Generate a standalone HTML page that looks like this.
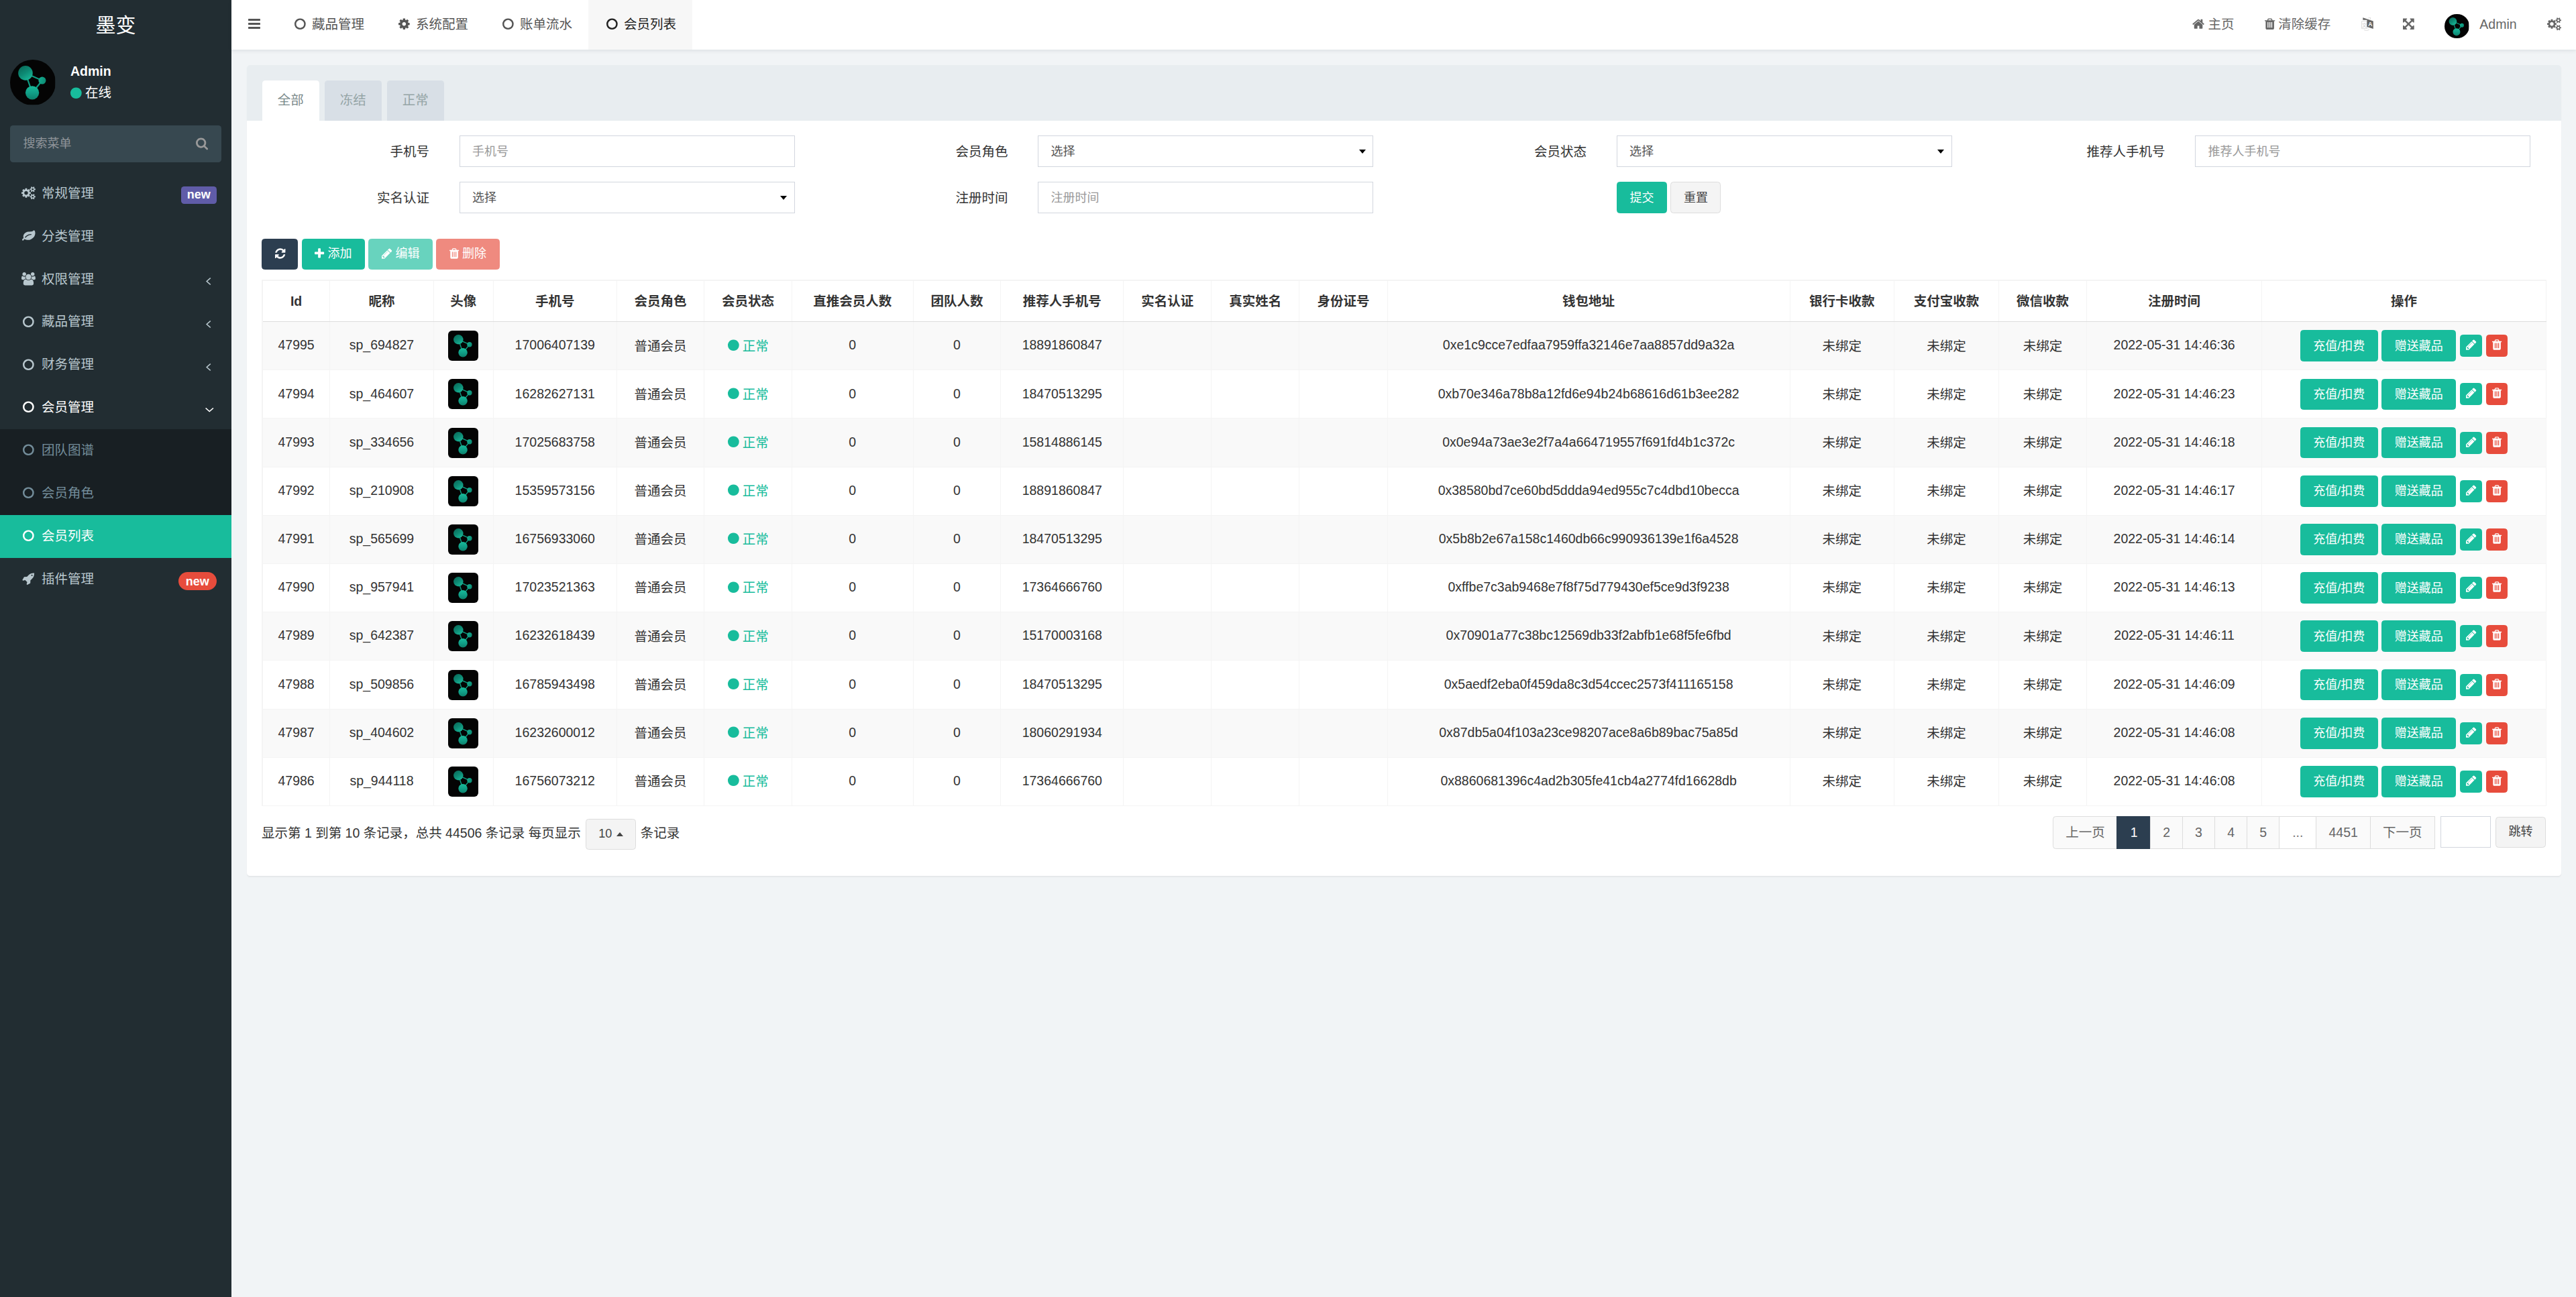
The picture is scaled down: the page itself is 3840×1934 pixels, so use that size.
<!DOCTYPE html>
<html lang="zh-CN"><head><meta charset="utf-8"><title>会员列表</title>
<style>
html,body{margin:0;padding:0;background:#f1f4f6;}
body{width:3840px;height:1934px;overflow:hidden;}
#z{zoom:1.5;position:relative;width:2560px;height:1289.34px;overflow:hidden;font-family:"Liberation Sans","Noto Sans CJK SC",sans-serif;font-size:13px;line-height:1.42857;color:#333;}
#z *{box-sizing:border-box;}
ul{list-style:none;margin:0;padding:0;}
a{text-decoration:none;color:inherit;}
.fa{display:inline-block;height:1em;fill:currentColor;vertical-align:-0.1429em;overflow:visible;}
/* sidebar */
.sidebar{position:absolute;left:0;top:0;width:230px;height:100%;background:#222d32;color:#b8c7ce;}
.logo{height:49.6px;line-height:50px;text-align:center;font-size:20px;color:#fff;background:#222d32;}
.uavatar{position:absolute;left:10px;top:59.5px;width:45px;height:45px;border-radius:50%;}
.uname{position:absolute;left:70px;top:64.6px;line-height:13px;font-weight:bold;color:#fff;}
.ustat{position:absolute;left:70px;top:85.6px;line-height:13px;color:#fff;white-space:pre;}
.udot{color:#18bc9c;position:relative;top:.6px;}
.sform{position:absolute;left:10px;top:124.6px;width:210px;height:36.8px;background:#374850;border-radius:3px;}
.sform .ph{position:absolute;left:13px;top:0;line-height:36.8px;color:#8f9499;font-size:12px;}
.sico{position:absolute;left:184.5px;top:11.6px;color:#999;font-size:13px;}
.smenu{position:absolute;left:0;top:171.3px;width:230px;}
.smenu li a{display:block;position:relative;padding:12px 5px 12px 15px;border-left:3px solid transparent;line-height:18.57px;height:42.57px;white-space:nowrap;}
.mib{display:inline-block;width:20px;text-align:center;position:relative;left:.6px;}
.smenu li.open>a{color:#fff;}
.smenu .sub{background:#181f23;}
.smenu .sub li a{color:#738d9a;}
.smenu .sub li.active a{background:#18bc9c;color:#fff;}
.prc{position:absolute;right:10px;top:50%;margin-top:-7px;line-height:13px;}
.chev{margin-right:10.4px;position:relative;top:2px;transform:scaleX(1.12);}
.chev.dn{margin-right:7.9px;}
.label{display:inline-block;font-size:12px;font-weight:bold;color:#fff;line-height:1;text-align:center;border-radius:3px;vertical-align:baseline;}
.bg-purple{background:#605ca8;width:35.3px;height:17.4px;padding-top:2.2px;margin-top:-0.15px;margin-right:4.8px;}
.bg-red{background:#e74c3c;width:38px;height:18px;border-radius:9px;padding-top:3.3px;margin-top:0.2px;margin-right:4.9px;}
/* header */
.hdr{position:absolute;left:230px;top:0;right:0;height:49.5px;background:#fff;box-shadow:0 1px 3.5px rgba(0,21,41,.085);color:#555;}
.toggle{position:absolute;left:16.8px;top:0;line-height:48.5px;font-size:14px;color:#555;}
.tabs{position:absolute;left:44.67px;top:0;height:49.5px;}
.tabs li{float:left;width:103.33px;height:49.5px;}
.tabs li a{display:block;padding:0 15px;line-height:49px;white-space:nowrap;color:#555;}
.tabs li.active{background:#f7f7f7;}
.tabs li.active a{color:#222;}
.fw{display:inline-block;width:16.71px;text-align:center;}
.rnav{position:absolute;right:0;top:0;height:49.5px;display:flex;}
.rnav li a{display:block;padding:0 15px;line-height:48.6px;white-space:nowrap;color:#666;}
.havatar{width:24.4px;height:24.4px;border-radius:50%;vertical-align:middle;margin-right:10.5px;margin-top:3.4px;position:relative;top:-0.9px;}
.lang{vertical-align:-1.9px;position:relative;left:.6px;}
/* content */
.content{position:absolute;left:230px;top:49.6px;right:0;padding:15px;}
.panel{background:#fff;border-radius:3px;box-shadow:0 1px 1px rgba(0,0,0,.05);}
.phead{background:#e8edf0;height:55.4px;padding:15.4px 15px 0 15.5px;border-radius:3px 3px 0 0;}
.ntabs li{float:left;width:56.8px;margin-right:5.2px;height:40px;background:#d8dfe6;border-radius:3px 3px 0 0;color:#95a5a6;}
.ntabs li a{display:block;text-align:center;line-height:20px;padding:9.3px 0 0;}
.ntabs li.active{background:#fff;color:#7b8a8b;}
.pbody{padding:15px;}
.cs{margin:0 -15px;}
.frow{height:46px;}
.frow:after{content:"";display:block;clear:both;}
.fg{float:left;width:25%;padding:0 15px;height:31px;}
.fg label{float:left;width:33.3333%;text-align:right;padding:7px 15px 0 15px;line-height:18.57px;font-weight:normal;}
.fc{float:left;width:calc(66.6667% - 30px);margin-left:15px;height:31px;border:1px solid #d2d6de;background:#fff;padding:7px 12px 5px;font-size:12px;line-height:17.14px;color:#555;position:relative;}
.fc .ph{color:#999;}
.caret{display:inline-block;width:0;height:0;border-top:4px solid #000;border-left:3.8px solid transparent;border-right:3.8px solid transparent;}
.fc .caret{position:absolute;right:7px;top:13px;}
.caret.up{border-top:0;border-bottom:4px solid #444;vertical-align:middle;margin-left:.6px;position:relative;left:.8px;}
.fbtn{margin-left:calc(33.3333% + 15px);white-space:nowrap;}
.fbtn .btn{height:31.14px;padding-top:6.9px;margin-top:-.2px;}
.btn{display:inline-block;padding:6px 12.35px;font-size:12px;line-height:1.42857;border:1px solid transparent;border-radius:3px;text-align:center;white-space:nowrap;vertical-align:middle;}
.btn-success{background:#18bc9c;border-color:#18bc9c;color:#fff;}
.btn-primary{background:#2c3e50;border-color:#2c3e50;color:#fff;}
.btn-danger{background:#e74c3c;border-color:#e74c3c;color:#fff;}
.btn-default{background:#f4f4f4;border-color:#ddd;color:#444;}
.btn.disabled{opacity:.65;}
.btn-xs{padding:1px 5.4px;font-size:12px;line-height:18px;height:22px;border-radius:3px;}
.toolbar{margin-top:10.3px;height:30.5px;white-space:nowrap;}
.toolbar .btn{height:30.5px;padding-top:6.3px;}
/* table */
.tbl{margin-top:10.3px;width:calc(100% - .7px);table-layout:fixed;border-collapse:collapse;border:1px solid #f4f4f4;border-top:1.4px solid #f4f4f4;border-left:1.4px solid #f4f4f4;}
.tbl th,.tbl td{border:1px solid #f4f4f4;text-align:center;vertical-align:middle;padding:0;white-space:nowrap;overflow:hidden;}
.tbl th{font-weight:bold;border-bottom:1px solid #ddd;}
.thi{padding:8px;line-height:24px;height:40px;}
.tbl td{padding:7.7px 8px 8.3px;height:48.13px;}
.tbl td:last-child,.tbl td:nth-child(3){padding:8px;}
.tbl tbody tr:nth-child(odd){background:#f9f9f9;}
.timg{width:30px;height:30px;border-radius:4px;vertical-align:middle;display:inline-block;}
.ok{color:#18bc9c;}
.opb{height:31.14px;padding-top:6.9px;padding-bottom:5px;}
/* pagination */
.pgn{position:relative;height:54.3px;}
.pinfo{position:absolute;left:0;top:11.5px;line-height:31px;white-space:nowrap;}
.psz{height:31px;width:50.2px;padding:6px 0;vertical-align:middle;margin:0 1px;}
.pright{position:absolute;right:0;top:10.2px;white-space:nowrap;}
.pagination{display:inline-block;vertical-align:top;}
.pagination li{float:left;}
.pagination li a{display:block;padding:6.6px 0 0;height:32.4px;text-align:center;margin-left:-1px;line-height:18.57px;border:1px solid #ddd;background:#fafafa;color:#666;}
.pagination li:first-child a{margin-left:0;border-radius:3px 0 0 3px;}

.pagination li.active a{background:#2c3e50;border-color:#2c3e50;color:#fff;}
.pagination li.dis a{background:#fff;color:#777;}
.jump{display:inline-block;vertical-align:top;margin-left:5.8px;}
.jin{display:inline-block;width:50px;height:31px;border:1px solid #d2d6de;background:#fff;vertical-align:top;}
.jbtn{height:30.5px;width:50px;padding:6px 0;vertical-align:top;margin-left:4.5px;margin-top:.7px;}

.cj{position:relative;top:.8px;}
@supports not (zoom:1.5){#z{transform:scale(1.5);transform-origin:0 0;}}

</style></head><body>
<svg width="0" height="0" style="position:absolute"><defs>
<linearGradient id="g1" x1="0.25" y1="0.05" x2="0.85" y2="0.95"><stop offset="0" stop-color="#0a6f5d"/><stop offset="0.45" stop-color="#0d8a74"/><stop offset="1" stop-color="#19b999"/></linearGradient>
<linearGradient id="g2" x1="0.5" y1="0" x2="0.5" y2="1"><stop offset="0" stop-color="#17bb9a"/><stop offset="0.5" stop-color="#11a088"/><stop offset="1" stop-color="#0c806b"/></linearGradient>
<linearGradient id="g3" x1="0" y1="0.3" x2="1" y2="0.7"><stop offset="0" stop-color="#14ad90"/><stop offset="1" stop-color="#0d8a73"/></linearGradient>
<symbol id="mol" viewBox="0 0 100 100"><rect width="100" height="100" fill="#040404"/>
<g stroke="#0f9c82" stroke-width="3.2" fill="none"><path d="M34 29.5L71 46L49 73Z"/></g>
<circle cx="34" cy="29.5" r="16" fill="url(#g1)"/><circle cx="71" cy="46" r="8.2" fill="url(#g3)"/><circle cx="49" cy="73" r="15" fill="url(#g2)"/>
</symbol></defs></svg>
<div id="z">
<aside class="sidebar">
<div class="logo">墨变</div>
<div class="userpanel"><svg class="uavatar" style=""><use href="#mol"/></svg><div class="uname">Admin</div><div class="ustat"><svg class="fa udot" viewBox="128 0 1536 1792" style="width:0.8571em;"><path d="M1664 896q0 209-103 385.500t-279.500 279.500-385.500 103-385.500-103-279.500-279.500-103-385.500 103-385.500 279.500-279.500 385.500-103 385.500 103 279.500 279.500 103 385.500z"/></svg> 在线</div></div>
<div class="sform"><span class="ph">搜索菜单</span><svg class="fa sico" viewBox="64 0 1664 1792" style="width:0.9286em;"><path d="M1216 832q0-185-131.500-316.500t-316.500-131.500-316.500 131.500-131.500 316.500 131.500 316.500 316.500 131.500 316.500-131.500 131.500-316.500zm512 832q0 52-38 90t-90 38q-54 0-90-38l-343-342q-179 124-399 124-143 0-273.500-55.500t-225-150-150-225-55.500-273.500 55.500-273.500 150-225 225-150 273.500-55.500 273.500 55.500 225 150 150 225 55.500 273.500q0 220-124 399l343 343q37 37 37 90z"/></svg></div>
<ul class="smenu">
<li class=""><a><span class="mib"><svg class="fa mi" viewBox="0 0 1920 1792" style="width:1.0714em;"><path d="M896 896q0-106-75-181t-181-75-181 75-75 181 75 181 181 75 181-75 75-181zm768 512q0-52-38-90t-90-38-90 38-38 90q0 53 37.500 90.500t90.500 37.500 90.500-37.500 37.500-90.500zm0-1024q0-52-38-90t-90-38-90 38-38 90q0 53 37.500 90.500t90.500 37.500 90.500-37.500 37.500-90.500zm-384 421v185q0 10-7 19.500t-16 10.500l-155 24q-11 35-32 76 34 48 90 115 7 11 7 20 0 12-7 19-23 30-82.500 89.500t-78.500 59.500q-11 0-21-7l-115-90q-37 19-77 31-11 108-23 155-7 24-30 24h-186q-11 0-20-7.500t-10-17.500l-23-153q-34-10-75-31l-118 89q-7 7-20 7-11 0-21-8-144-133-144-160 0-9 7-19 10-14 41-53t47-61q-23-44-35-82l-152-24q-10-1-17-9.500t-7-19.500v-185q0-10 7-19.500t16-10.500l155-24q11-35 32-76-34-48-90-115-7-11-7-20 0-12 7-20 22-30 82-89t79-59q11 0 21 7l115 90q34-18 77-32 11-108 23-154 7-24 30-24h186q11 0 20 7.500t10 17.500l23 153q34 10 75 31l118-89q8-7 20-7 11 0 21 8 144 133 144 160 0 8-7 19-12 16-42 54t-45 60q23 48 34 82l152 23q10 2 17 10.500t7 19.500zm640 533v140q0 16-149 31-12 27-30 52 51 113 51 138 0 4-4 7-122 71-124 71-8 0-46-47t-52-68q-20 2-30 2t-30-2q-14 21-52 68t-46 47q-2 0-124-71-4-3-4-7 0-25 51-138-18-25-30-52-149-15-149-31v-140q0-16 149-31 13-29 30-52-51-113-51-138 0-4 4-7 4-2 35-20t59-34 30-16q8 0 46 46.500t52 67.500q20-2 30-2t30 2q51-71 92-112l6-2q4 0 124 70 4 3 4 7 0 25-51 138 17 23 30 52 149 15 149 31zm0-1024v140q0 16-149 31-12 27-30 52 51 113 51 138 0 4-4 7-122 71-124 71-8 0-46-47t-52-68q-20 2-30 2t-30-2q-14 21-52 68t-46 47q-2 0-124-71-4-3-4-7 0-25 51-138-18-25-30-52-149-15-149-31v-140q0-16 149-31 13-29 30-52-51-113-51-138 0-4 4-7 4-2 35-20t59-34 30-16q8 0 46 46.500t52 67.500q20-2 30-2t30 2q51-71 92-112l6-2q4 0 124 70 4 3 4 7 0 25-51 138 17 23 30 52 149 15 149 31z"/></svg></span> <span>常规管理</span><span class="prc"><small class="label bg-purple">new</small></span></a></li>
<li class=""><a><span class="mib"><svg class="fa mi" viewBox="0 0 1792 1792" style="width:1.0000em;"><path d="M1280 704q0-26-19-45t-45-19q-172 0-318 49.500t-259.500 134-235.500 219.500q-19 21-19 45 0 26 19 45t45 19q24 0 45-19 27-24 74-71t67-66q137-124 268.500-176t313.500-52q26 0 45-19t19-45zm512-198q0 95-20 193-46 224-184.500 383t-357.500 268q-214 108-438 108-148 0-286-47-15-5-88-42t-96-37q-16 0-39.500 32t-45 70-52.500 70-60 32q-43 0-63.500-17.500t-45.500-59.500q-2-4-6-11t-5.500-10-3-9.500-1.500-13.500q0-35 31-73.500t68-65.500 68-56 31-48q0-4-14-38t-16-44q-9-51-9-104 0-115 43.500-220t119-184.500 170.500-139 204-95.500q55-18 145-25.500t179.500-9 178.500-6 163.500-24 113.500-56.500l29.500-29.500 29.500-28 27-20 36.500-16 43.500-4.500q39 0 70.500 46t47.500 112 24 124 8 96z"/></svg></span> <span>分类管理</span></a></li>
<li class=""><a><span class="mib"><svg class="fa mi" viewBox="0 0 1920 1792" style="width:1.0714em;"><path d="M593 896q-162 5-265 128h-134q-82 0-138-40.500t-56-118.500q0-353 124-353 6 0 43.500 21t97.500 42.500 119 21.500q67 0 133-23-5 37-5 66 0 139 81 256zm1071 637q0 120-73 189.500t-194 69.500h-874q-121 0-194-69.500t-73-189.500q0-53 3.500-103.500t14-109 26.500-108.500 43-97.500 62-81 85.500-53.500 111.500-20q10 0 43 21.500t73 48 107 48 135 21.500 135-21.500 107-48 73-48 43-21.500q61 0 111.500 20t85.500 53.500 62 81 43 97.500 26.500 108.500 14 109 3.500 103.500zm-1024-1277q0 106-75 181t-181 75-181-75-75-181 75-181 181-75 181 75 75 181zm704 384q0 159-112.500 271.500t-271.500 112.500-271.500-112.500-112.500-271.500 112.500-271.500 271.500-112.500 271.500 112.500 112.500 271.500zm576 225q0 78-56 118.500t-138 40.500h-134q-103-123-265-128 81-117 81-256 0-29-5-66 66 23 133 23 59 0 119-21.500t97.500-42.500 43.500-21q124 0 124 353zm-128-609q0 106-75 181t-181 75-181-75-75-181 75-181 181-75 181 75 75 181z"/></svg></span> <span>权限管理</span><span class="prc"><svg class="fa chev" viewBox="576 0 640 1792" style="width:0.3571em;"><path d="M1203 544q0 13-10 23l-393 393 393 393q10 10 10 23t-10 23l-50 50q-10 10-23 10t-23-10l-466-466q-10-10-10-23t10-23l466-466q10-10 23-10t23 10l50 50q10 10 10 23z"/></svg></span></a></li>
<li class=""><a><span class="mib"><svg class="fa mi" viewBox="128 0 1536 1792" style="width:0.8571em;"><path d="M896 352q-148 0-273 73t-198 198-73 273 73 273 198 198 273 73 273-73 198-198 73-273-73-273-198-198-273-73zm768 544q0 209-103 385.500t-279.500 279.500-385.500 103-385.500-103-279.500-279.500-103-385.500 103-385.500 279.500-279.500 385.500-103 385.500 103 279.500 279.500 103 385.500z"/></svg></span> <span>藏品管理</span><span class="prc"><svg class="fa chev" viewBox="576 0 640 1792" style="width:0.3571em;"><path d="M1203 544q0 13-10 23l-393 393 393 393q10 10 10 23t-10 23l-50 50q-10 10-23 10t-23-10l-466-466q-10-10-10-23t10-23l466-466q10-10 23-10t23 10l50 50q10 10 10 23z"/></svg></span></a></li>
<li class=""><a><span class="mib"><svg class="fa mi" viewBox="128 0 1536 1792" style="width:0.8571em;"><path d="M896 352q-148 0-273 73t-198 198-73 273 73 273 198 198 273 73 273-73 198-198 73-273-73-273-198-198-273-73zm768 544q0 209-103 385.500t-279.500 279.500-385.500 103-385.500-103-279.500-279.500-103-385.500 103-385.500 279.500-279.500 385.500-103 385.500 103 279.500 279.500 103 385.500z"/></svg></span> <span>财务管理</span><span class="prc"><svg class="fa chev" viewBox="576 0 640 1792" style="width:0.3571em;"><path d="M1203 544q0 13-10 23l-393 393 393 393q10 10 10 23t-10 23l-50 50q-10 10-23 10t-23-10l-466-466q-10-10-10-23t10-23l466-466q10-10 23-10t23 10l50 50q10 10 10 23z"/></svg></span></a></li>
<li class="open"><a><span class="mib"><svg class="fa mi" viewBox="128 0 1536 1792" style="width:0.8571em;"><path d="M896 352q-148 0-273 73t-198 198-73 273 73 273 198 198 273 73 273-73 198-198 73-273-73-273-198-198-273-73zm768 544q0 209-103 385.500t-279.500 279.500-385.500 103-385.500-103-279.500-279.500-103-385.500 103-385.500 279.500-279.500 385.500-103 385.500 103 279.500 279.500 103 385.500z"/></svg></span> <span>会员管理</span><span class="prc"><svg class="fa chev dn" viewBox="320 0 1152 1792" style="width:0.6429em;"><path d="M1395 736q0 13-10 23l-466 466q-10 10-23 10t-23-10l-466-466q-10-10-10-23t10-23l50-50q10-10 23-10t23 10l393 393 393-393q10-10 23-10t23 10l50 50q10 10 10 23z"/></svg></span></a></li>
<ul class="sub">
<li class=""><a><span class="mib"><svg class="fa mi" viewBox="128 0 1536 1792" style="width:0.8571em;"><path d="M896 352q-148 0-273 73t-198 198-73 273 73 273 198 198 273 73 273-73 198-198 73-273-73-273-198-198-273-73zm768 544q0 209-103 385.500t-279.500 279.500-385.500 103-385.500-103-279.500-279.500-103-385.500 103-385.500 279.500-279.500 385.500-103 385.500 103 279.500 279.500 103 385.500z"/></svg></span> <span>团队图谱</span></a></li>
<li class=""><a><span class="mib"><svg class="fa mi" viewBox="128 0 1536 1792" style="width:0.8571em;"><path d="M896 352q-148 0-273 73t-198 198-73 273 73 273 198 198 273 73 273-73 198-198 73-273-73-273-198-198-273-73zm768 544q0 209-103 385.500t-279.500 279.500-385.500 103-385.500-103-279.500-279.500-103-385.500 103-385.500 279.500-279.500 385.500-103 385.500 103 279.500 279.500 103 385.500z"/></svg></span> <span>会员角色</span></a></li>
<li class="active"><a><span class="mib"><svg class="fa mi" viewBox="128 0 1536 1792" style="width:0.8571em;"><path d="M896 352q-148 0-273 73t-198 198-73 273 73 273 198 198 273 73 273-73 198-198 73-273-73-273-198-198-273-73zm768 544q0 209-103 385.500t-279.500 279.500-385.500 103-385.500-103-279.500-279.500-103-385.500 103-385.500 279.500-279.500 385.500-103 385.500 103 279.500 279.500 103 385.500z"/></svg></span> <span>会员列表</span></a></li>
</ul>
<li class=""><a><span class="mib"><svg class="fa mi" viewBox="0 0 1664 1792" style="width:0.9286em;"><path d="M1440 448q0-40-28-68t-68-28-68 28-28 68 28 68 68 28 68-28 28-68zm224-288q0 249-75.500 430.500t-253.500 360.500q-81 80-195 176l-20 379q-2 16-16 26l-384 224q-7 4-16 4-12 0-23-9l-64-64q-13-14-8-32l85-276-281-281-276 85q-3 1-9 1-14 0-23-9l-64-64q-17-19-5-39l224-384q10-14 26-16l379-20q96-114 176-195 188-187 358-258t431-71q14 0 24 9.500t10 22.500z"/></svg></span> <span>插件管理</span><span class="prc"><small class="label badge bg-red">new</small></span></a></li>
</ul>
</aside>
<header class="hdr">
<a class="toggle"><svg class="fa " viewBox="0 0 1536 1792" style="width:0.8571em;"><path d="M1536 1344v128q0 26-19 45t-45 19h-1408q-26 0-45-19t-19-45v-128q0-26 19-45t45-19h1408q26 0 45 19t19 45zm0-512v128q0 26-19 45t-45 19h-1408q-26 0-45-19t-19-45v-128q0-26 19-45t45-19h1408q26 0 45 19t19 45zm0-512v128q0 26-19 45t-45 19h-1408q-26 0-45-19t-19-45v-128q0-26 19-45t45-19h1408q26 0 45 19t19 45z"/></svg></a>
<ul class="tabs">
<li><a><span class="fw"><svg class="fa " viewBox="128 0 1536 1792" style="width:0.8571em;"><path d="M896 352q-148 0-273 73t-198 198-73 273 73 273 198 198 273 73 273-73 198-198 73-273-73-273-198-198-273-73zm768 544q0 209-103 385.500t-279.500 279.500-385.500 103-385.500-103-279.500-279.500-103-385.500 103-385.500 279.500-279.500 385.500-103 385.500 103 279.500 279.500 103 385.500z"/></svg></span> <span>藏品管理</span></a></li>
<li><a><span class="fw"><svg class="fa " viewBox="128 0 1536 1792" style="width:0.8571em;"><path d="M1152 896q0-106-75-181t-181-75-181 75-75 181 75 181 181 75 181-75 75-181zm512-109v222q0 12-8 23t-20 13l-185 28q-19 54-39 91 35 50 107 138 10 12 10 25t-9 23q-27 37-99 108t-94 71q-12 0-26-9l-138-108q-44 23-91 38-16 136-29 186-7 28-36 28h-222q-14 0-24.500-8.500t-11.500-21.500l-28-184q-49-16-90-37l-141 107q-10 9-25 9-14 0-25-11-126-114-165-168-7-10-7-23 0-12 8-23 15-21 51-66.500t54-70.500q-27-50-41-99l-183-27q-13-2-21-12.500t-8-23.500v-222q0-12 8-23t19-13l186-28q14-46 39-92-40-57-107-138-10-12-10-24 0-10 9-23 26-36 98.500-107.500t94.500-71.500q13 0 26 10l138 107q44-23 91-38 16-136 29-186 7-28 36-28h222q14 0 24.500 8.500t11.500 21.500l28 184q49 16 90 37l142-107q9-9 24-9 13 0 25 10 129 119 165 170 7 8 7 22 0 12-8 23-15 21-51 66.500t-54 70.500q26 50 41 98l183 28q13 2 21 12.500t8 23.500z"/></svg></span> <span>系统配置</span></a></li>
<li><a><span class="fw"><svg class="fa " viewBox="128 0 1536 1792" style="width:0.8571em;"><path d="M896 352q-148 0-273 73t-198 198-73 273 73 273 198 198 273 73 273-73 198-198 73-273-73-273-198-198-273-73zm768 544q0 209-103 385.500t-279.500 279.500-385.500 103-385.500-103-279.500-279.500-103-385.500 103-385.500 279.500-279.500 385.500-103 385.500 103 279.500 279.500 103 385.500z"/></svg></span> <span>账单流水</span></a></li>
<li class="active"><a><span class="fw"><svg class="fa " viewBox="128 0 1536 1792" style="width:0.8571em;"><path d="M896 352q-148 0-273 73t-198 198-73 273 73 273 198 198 273 73 273-73 198-198 73-273-73-273-198-198-273-73zm768 544q0 209-103 385.500t-279.500 279.500-385.500 103-385.500-103-279.500-279.500-103-385.500 103-385.500 279.500-279.500 385.500-103 385.500 103 279.500 279.500 103 385.500z"/></svg></span> <span>会员列表</span></a></li>
</ul>
<ul class="rnav">
<li><a><svg class="fa " viewBox="64 0 1664 1792" style="width:0.9286em;"><path d="M1472 992v480q0 26-19 45t-45 19h-384v-384h-256v384h-384q-26 0-45-19t-19-45v-480q0-1 .5-3t.5-3l575-474 575 474q1 2 1 6zm223-69l-62 74q-8 9-21 11h-3q-13 0-21-7l-692-577-692 577q-12 8-24 7-13-2-21-11l-62-74q-8-10-7-23.500t11-21.500l719-599q32-26 76-26t76 26l244 204v-195q0-14 9-23t23-9h192q14 0 23 9t9 23v408l219 182q10 8 11 21.500t-7 23.500z"/></svg> 主页</a></li>
<li><a><svg class="fa " viewBox="192 0 1408 1792" style="width:0.7857em;"><path d="M704 1376v-704q0-14-9-23t-23-9h-64q-14 0-23 9t-9 23v704q0 14 9 23t23 9h64q14 0 23-9t9-23zm256 0v-704q0-14-9-23t-23-9h-64q-14 0-23 9t-9 23v704q0 14 9 23t23 9h64q14 0 23-9t9-23zm256 0v-704q0-14-9-23t-23-9h-64q-14 0-23 9t-9 23v704q0 14 9 23t23 9h64q14 0 23-9t9-23zm-544-992h448l-48-117q-7-9-17-11h-317q-10 2-17 11zm928 32v64q0 14-9 23t-23 9h-96v948q0 83-47 143.500t-113 60.500h-832q-66 0-113-58.500t-47-141.500v-952h-96q-14 0-23-9t-9-23v-64q0-14 9-23t23-9h309l70-167q15-37 54-63t79-26h320q40 0 79 26t54 63l70 167h309q14 0 23 9t9 23z"/></svg> 清除缓存</a></li>
<li><a><svg class="fa lang" viewBox="0 0 18 20" style="width:12px;height:13.4px"><g fill="none" stroke="#cfcfcf" stroke-width="0.7"><path d="M0.6 5.6H8.4V16.6H0.6Z"/><path d="M4 18.3c2 1.6 5.5 1.6 8 -.6"/><path d="M10 1.2c1.4-.8 2.6-1 3.6-1v3"/></g><text x="4.5" y="14" font-size="7" fill="#cdcdcd" text-anchor="middle" font-family="Noto Sans CJK SC, sans-serif">文</text><path d="M2.3 0.2L17.8 5.4V17L8.4 14V3.8H2.3Z" fill="#666"/><text x="13.2" y="12.9" font-size="8.4" font-weight="bold" fill="#fff" text-anchor="middle" font-family="Liberation Sans, sans-serif">A</text></svg></a></li>
<li><a><svg class="fa " viewBox="0 -128 1536 1792" style="width:0.8571em;"><path d="M1283 413l-355 355 355 355 144-144q29-31 70-14 39 17 39 59v448q0 26-19 45t-45 19h-448q-42 0-59-40-17-39 14-69l144-144-355-355-355 355 144 144q31 30 14 69-17 40-59 40h-448q-26 0-45-19t-19-45v-448q0-42 40-59 39-17 69 14l144 144 355-355-355-355-144 144q-19 19-45 19-12 0-24-5-40-17-40-59v-448q0-26 19-45t45-19h448q42 0 59 40 17 39-14 69l-144 144 355 355 355-355-144-144q-31-30-14-69 17-40 59-40h448q26 0 45 19t19 45v448q0 42-39 59-13 5-25 5-26 0-45-19z"/></svg></a></li>
<li class="usr"><a><svg class="havatar" style=""><use href="#mol"/></svg><span>Admin</span></a></li>
<li><a><svg class="fa " viewBox="0 0 1920 1792" style="width:1.0714em;"><path d="M896 896q0-106-75-181t-181-75-181 75-75 181 75 181 181 75 181-75 75-181zm768 512q0-52-38-90t-90-38-90 38-38 90q0 53 37.500 90.500t90.500 37.500 90.500-37.500 37.500-90.500zm0-1024q0-52-38-90t-90-38-90 38-38 90q0 53 37.500 90.500t90.500 37.500 90.500-37.500 37.500-90.500zm-384 421v185q0 10-7 19.500t-16 10.500l-155 24q-11 35-32 76 34 48 90 115 7 11 7 20 0 12-7 19-23 30-82.500 89.500t-78.500 59.500q-11 0-21-7l-115-90q-37 19-77 31-11 108-23 155-7 24-30 24h-186q-11 0-20-7.500t-10-17.500l-23-153q-34-10-75-31l-118 89q-7 7-20 7-11 0-21-8-144-133-144-160 0-9 7-19 10-14 41-53t47-61q-23-44-35-82l-152-24q-10-1-17-9.500t-7-19.500v-185q0-10 7-19.500t16-10.500l155-24q11-35 32-76-34-48-90-115-7-11-7-20 0-12 7-20 22-30 82-89t79-59q11 0 21 7l115 90q34-18 77-32 11-108 23-154 7-24 30-24h186q11 0 20 7.500t10 17.500l23 153q34 10 75 31l118-89q8-7 20-7 11 0 21 8 144 133 144 160 0 8-7 19-12 16-42 54t-45 60q23 48 34 82l152 23q10 2 17 10.500t7 19.500zm640 533v140q0 16-149 31-12 27-30 52 51 113 51 138 0 4-4 7-122 71-124 71-8 0-46-47t-52-68q-20 2-30 2t-30-2q-14 21-52 68t-46 47q-2 0-124-71-4-3-4-7 0-25 51-138-18-25-30-52-149-15-149-31v-140q0-16 149-31 13-29 30-52-51-113-51-138 0-4 4-7 4-2 35-20t59-34 30-16q8 0 46 46.500t52 67.500q20-2 30-2t30 2q51-71 92-112l6-2q4 0 124 70 4 3 4 7 0 25-51 138 17 23 30 52 149 15 149 31zm0-1024v140q0 16-149 31-12 27-30 52 51 113 51 138 0 4-4 7-122 71-124 71-8 0-46-47t-52-68q-20 2-30 2t-30-2q-14 21-52 68t-46 47q-2 0-124-71-4-3-4-7 0-25 51-138-18-25-30-52-149-15-149-31v-140q0-16 149-31 13-29 30-52-51-113-51-138 0-4 4-7 4-2 35-20t59-34 30-16q8 0 46 46.500t52 67.500q20-2 30-2t30 2q51-71 92-112l6-2q4 0 124 70 4 3 4 7 0 25-51 138 17 23 30 52 149 15 149 31z"/></svg></a></li>
</ul>
</header>
<div class="content"><div class="panel">
<div class="phead"><ul class="ntabs"><li class="active"><a>全部</a></li><li><a>冻结</a></li><li><a>正常</a></li></ul></div>
<div class="pbody"><div class="cs">
<div class="frow"><div class="fg"><label>手机号</label><div class="fc"><span class="ph">手机号</span></div></div><div class="fg"><label>会员角色</label><div class="fc sel"><span>选择</span><i class="caret"></i></div></div><div class="fg"><label>会员状态</label><div class="fc sel"><span>选择</span><i class="caret"></i></div></div><div class="fg"><label>推荐人手机号</label><div class="fc"><span class="ph">推荐人手机号</span></div></div></div>
<div class="frow"><div class="fg"><label>实名认证</label><div class="fc sel"><span>选择</span><i class="caret"></i></div></div><div class="fg"><label>注册时间</label><div class="fc"><span class="ph">注册时间</span></div></div><div class="fg"><div class="fbtn"><a class="btn btn-success">提交</a> <a class="btn btn-default">重置</a></div></div></div>
</div><div class="toolbar"><a class="btn btn-sm btn-primary"><svg class="fa " viewBox="128 0 1536 1792" style="width:0.8571em;"><path d="M1639 1056q0 5-1 7-64 268-268 434.500t-478 166.500q-146 0-282.500-55t-243.500-157l-129 129q-19 19-45 19t-45-19-19-45v-448q0-26 19-45t45-19h448q26 0 45 19t19 45-19 45l-137 137q71 66 161 102t187 36q134 0 250-65t186-179q11-17 53-117 8-23 30-23h192q13 0 22.500 9.500t9.500 22.500zm25-800v448q0 26-19 45t-45 19h-448q-26 0-45-19t-19-45 19-45l138-138q-148-137-349-137-134 0-250 65t-186 179q-11 17-53 117-8 23-30 23h-199q-13 0-22.500-9.500t-9.500-22.500v-7q65-268 270-434.500t480-166.500q146 0 284 55.500t245 156.500l130-129q19-19 45-19t45 19 19 45z"/></svg> </a> <a class="btn btn-sm btn-success"><svg class="fa " viewBox="192 0 1408 1792" style="width:0.7857em;"><path d="M1600 736v192q0 40-28 68t-68 28h-416v416q0 40-28 68t-68 28h-192q-40 0-68-28t-28-68v-416h-416q-40 0-68-28t-28-68v-192q0-40 28-68t68-28h416v-416q0-40 28-68t68-28h192q40 0 68 28t28 68v416h416q40 0 68 28t28 68z"/></svg> 添加</a> <a class="btn btn-sm btn-success disabled"><svg class="fa " viewBox="128 0 1536 1792" style="width:0.8571em;"><path d="M491 1536l91-91-235-235-91 91v107h128v128h107zm523-928q0-22-22-22-10 0-17 7l-542 542q-7 7-7 17 0 22 22 22 10 0 17-7l542-542q7-7 7-17zm-54-192l416 416-832 832h-416v-416zm683 96q0 53-37 90l-166 166-416-416 166-165q36-38 90-38 53 0 91 38l235 234q37 39 37 91z"/></svg> 编辑</a> <a class="btn btn-sm btn-danger disabled"><svg class="fa " viewBox="192 0 1408 1792" style="width:0.7857em;"><path d="M704 1376v-704q0-14-9-23t-23-9h-64q-14 0-23 9t-9 23v704q0 14 9 23t23 9h64q14 0 23-9t9-23zm256 0v-704q0-14-9-23t-23-9h-64q-14 0-23 9t-9 23v704q0 14 9 23t23 9h64q14 0 23-9t9-23zm256 0v-704q0-14-9-23t-23-9h-64q-14 0-23 9t-9 23v704q0 14 9 23t23 9h64q14 0 23-9t9-23zm-544-992h448l-48-117q-7-9-17-11h-317q-10 2-17 11zm928 32v64q0 14-9 23t-23 9h-96v948q0 83-47 143.500t-113 60.500h-832q-66 0-113-58.500t-47-141.500v-952h-96q-14 0-23-9t-9-23v-64q0-14 9-23t23-9h309l70-167q15-37 54-63t79-26h320q40 0 79 26t54 63l70 167h309q14 0 23 9t9 23z"/></svg> 删除</a></div><table class="tbl"><thead><tr><th style="width:67.1px"><div class="thi">Id</div></th><th style="width:103.1px"><div class="thi">昵称</div></th><th style="width:59.4px"><div class="thi">头像</div></th><th style="width:122.5px"><div class="thi">手机号</div></th><th style="width:87.2px"><div class="thi">会员角色</div></th><th style="width:86.9px"><div class="thi">会员状态</div></th><th style="width:120.5px"><div class="thi">直推会员人数</div></th><th style="width:87.2px"><div class="thi">团队人数</div></th><th style="width:122.0px"><div class="thi">推荐人手机号</div></th><th style="width:87.2px"><div class="thi">实名认证</div></th><th style="width:87.5px"><div class="thi">真实姓名</div></th><th style="width:87.5px"><div class="thi">身份证号</div></th><th style="width:400.0px"><div class="thi">钱包地址</div></th><th style="width:103.6px"><div class="thi">银行卡收款</div></th><th style="width:103.9px"><div class="thi">支付宝收款</div></th><th style="width:87.5px"><div class="thi">微信收款</div></th><th style="width:174.0px"><div class="thi">注册时间</div></th><th style="width:282.4px"><div class="thi">操作</div></th></tr></thead><tbody>
<tr><td>47995</td><td>sp_694827</td><td><svg class="timg" style=""><use href="#mol"/></svg></td><td>17006407139</td><td><span class="cj">普通会员</span></td><td><span class="ok"><svg class="fa " viewBox="128 0 1536 1792" style="width:0.8571em;"><path d="M1664 896q0 209-103 385.500t-279.500 279.500-385.500 103-385.500-103-279.500-279.500-103-385.500 103-385.500 279.500-279.500 385.500-103 385.500 103 279.500 279.500 103 385.500z"/></svg> <span class="cj">正常</span></span></td><td>0</td><td>0</td><td>18891860847</td><td></td><td></td><td></td><td>0xe1c9cce7edfaa7959ffa32146e7aa8857dd9a32a</td><td><span class="cj">未绑定</span></td><td><span class="cj">未绑定</span></td><td><span class="cj">未绑定</span></td><td>2022-05-31 14:46:36</td><td><a class="btn btn-success opb">充值/扣费</a> <a class="btn btn-success opb">赠送藏品</a> <a class="btn btn-xs btn-success"><svg class="fa " viewBox="128 0 1536 1792" style="width:0.8571em;"><path d="M491 1536l91-91-235-235-91 91v107h128v128h107zm523-928q0-22-22-22-10 0-17 7l-542 542q-7 7-7 17 0 22 22 22 10 0 17-7l542-542q7-7 7-17zm-54-192l416 416-832 832h-416v-416zm683 96q0 53-37 90l-166 166-416-416 166-165q36-38 90-38 53 0 91 38l235 234q37 39 37 91z"/></svg></a> <a class="btn btn-xs btn-danger"><svg class="fa " viewBox="192 0 1408 1792" style="width:0.7857em;"><path d="M704 1376v-704q0-14-9-23t-23-9h-64q-14 0-23 9t-9 23v704q0 14 9 23t23 9h64q14 0 23-9t9-23zm256 0v-704q0-14-9-23t-23-9h-64q-14 0-23 9t-9 23v704q0 14 9 23t23 9h64q14 0 23-9t9-23zm256 0v-704q0-14-9-23t-23-9h-64q-14 0-23 9t-9 23v704q0 14 9 23t23 9h64q14 0 23-9t9-23zm-544-992h448l-48-117q-7-9-17-11h-317q-10 2-17 11zm928 32v64q0 14-9 23t-23 9h-96v948q0 83-47 143.500t-113 60.500h-832q-66 0-113-58.500t-47-141.500v-952h-96q-14 0-23-9t-9-23v-64q0-14 9-23t23-9h309l70-167q15-37 54-63t79-26h320q40 0 79 26t54 63l70 167h309q14 0 23 9t9 23z"/></svg></a></td></tr>
<tr><td>47994</td><td>sp_464607</td><td><svg class="timg" style=""><use href="#mol"/></svg></td><td>16282627131</td><td><span class="cj">普通会员</span></td><td><span class="ok"><svg class="fa " viewBox="128 0 1536 1792" style="width:0.8571em;"><path d="M1664 896q0 209-103 385.500t-279.500 279.500-385.500 103-385.500-103-279.500-279.500-103-385.500 103-385.500 279.500-279.500 385.500-103 385.500 103 279.500 279.500 103 385.500z"/></svg> <span class="cj">正常</span></span></td><td>0</td><td>0</td><td>18470513295</td><td></td><td></td><td></td><td>0xb70e346a78b8a12fd6e94b24b68616d61b3ee282</td><td><span class="cj">未绑定</span></td><td><span class="cj">未绑定</span></td><td><span class="cj">未绑定</span></td><td>2022-05-31 14:46:23</td><td><a class="btn btn-success opb">充值/扣费</a> <a class="btn btn-success opb">赠送藏品</a> <a class="btn btn-xs btn-success"><svg class="fa " viewBox="128 0 1536 1792" style="width:0.8571em;"><path d="M491 1536l91-91-235-235-91 91v107h128v128h107zm523-928q0-22-22-22-10 0-17 7l-542 542q-7 7-7 17 0 22 22 22 10 0 17-7l542-542q7-7 7-17zm-54-192l416 416-832 832h-416v-416zm683 96q0 53-37 90l-166 166-416-416 166-165q36-38 90-38 53 0 91 38l235 234q37 39 37 91z"/></svg></a> <a class="btn btn-xs btn-danger"><svg class="fa " viewBox="192 0 1408 1792" style="width:0.7857em;"><path d="M704 1376v-704q0-14-9-23t-23-9h-64q-14 0-23 9t-9 23v704q0 14 9 23t23 9h64q14 0 23-9t9-23zm256 0v-704q0-14-9-23t-23-9h-64q-14 0-23 9t-9 23v704q0 14 9 23t23 9h64q14 0 23-9t9-23zm256 0v-704q0-14-9-23t-23-9h-64q-14 0-23 9t-9 23v704q0 14 9 23t23 9h64q14 0 23-9t9-23zm-544-992h448l-48-117q-7-9-17-11h-317q-10 2-17 11zm928 32v64q0 14-9 23t-23 9h-96v948q0 83-47 143.500t-113 60.500h-832q-66 0-113-58.500t-47-141.500v-952h-96q-14 0-23-9t-9-23v-64q0-14 9-23t23-9h309l70-167q15-37 54-63t79-26h320q40 0 79 26t54 63l70 167h309q14 0 23 9t9 23z"/></svg></a></td></tr>
<tr><td>47993</td><td>sp_334656</td><td><svg class="timg" style=""><use href="#mol"/></svg></td><td>17025683758</td><td><span class="cj">普通会员</span></td><td><span class="ok"><svg class="fa " viewBox="128 0 1536 1792" style="width:0.8571em;"><path d="M1664 896q0 209-103 385.500t-279.500 279.500-385.500 103-385.500-103-279.500-279.500-103-385.500 103-385.500 279.500-279.500 385.500-103 385.500 103 279.500 279.500 103 385.500z"/></svg> <span class="cj">正常</span></span></td><td>0</td><td>0</td><td>15814886145</td><td></td><td></td><td></td><td>0x0e94a73ae3e2f7a4a664719557f691fd4b1c372c</td><td><span class="cj">未绑定</span></td><td><span class="cj">未绑定</span></td><td><span class="cj">未绑定</span></td><td>2022-05-31 14:46:18</td><td><a class="btn btn-success opb">充值/扣费</a> <a class="btn btn-success opb">赠送藏品</a> <a class="btn btn-xs btn-success"><svg class="fa " viewBox="128 0 1536 1792" style="width:0.8571em;"><path d="M491 1536l91-91-235-235-91 91v107h128v128h107zm523-928q0-22-22-22-10 0-17 7l-542 542q-7 7-7 17 0 22 22 22 10 0 17-7l542-542q7-7 7-17zm-54-192l416 416-832 832h-416v-416zm683 96q0 53-37 90l-166 166-416-416 166-165q36-38 90-38 53 0 91 38l235 234q37 39 37 91z"/></svg></a> <a class="btn btn-xs btn-danger"><svg class="fa " viewBox="192 0 1408 1792" style="width:0.7857em;"><path d="M704 1376v-704q0-14-9-23t-23-9h-64q-14 0-23 9t-9 23v704q0 14 9 23t23 9h64q14 0 23-9t9-23zm256 0v-704q0-14-9-23t-23-9h-64q-14 0-23 9t-9 23v704q0 14 9 23t23 9h64q14 0 23-9t9-23zm256 0v-704q0-14-9-23t-23-9h-64q-14 0-23 9t-9 23v704q0 14 9 23t23 9h64q14 0 23-9t9-23zm-544-992h448l-48-117q-7-9-17-11h-317q-10 2-17 11zm928 32v64q0 14-9 23t-23 9h-96v948q0 83-47 143.500t-113 60.500h-832q-66 0-113-58.500t-47-141.500v-952h-96q-14 0-23-9t-9-23v-64q0-14 9-23t23-9h309l70-167q15-37 54-63t79-26h320q40 0 79 26t54 63l70 167h309q14 0 23 9t9 23z"/></svg></a></td></tr>
<tr><td>47992</td><td>sp_210908</td><td><svg class="timg" style=""><use href="#mol"/></svg></td><td>15359573156</td><td><span class="cj">普通会员</span></td><td><span class="ok"><svg class="fa " viewBox="128 0 1536 1792" style="width:0.8571em;"><path d="M1664 896q0 209-103 385.500t-279.500 279.500-385.500 103-385.500-103-279.500-279.500-103-385.500 103-385.500 279.500-279.500 385.500-103 385.500 103 279.500 279.500 103 385.500z"/></svg> <span class="cj">正常</span></span></td><td>0</td><td>0</td><td>18891860847</td><td></td><td></td><td></td><td>0x38580bd7ce60bd5ddda94ed955c7c4dbd10becca</td><td><span class="cj">未绑定</span></td><td><span class="cj">未绑定</span></td><td><span class="cj">未绑定</span></td><td>2022-05-31 14:46:17</td><td><a class="btn btn-success opb">充值/扣费</a> <a class="btn btn-success opb">赠送藏品</a> <a class="btn btn-xs btn-success"><svg class="fa " viewBox="128 0 1536 1792" style="width:0.8571em;"><path d="M491 1536l91-91-235-235-91 91v107h128v128h107zm523-928q0-22-22-22-10 0-17 7l-542 542q-7 7-7 17 0 22 22 22 10 0 17-7l542-542q7-7 7-17zm-54-192l416 416-832 832h-416v-416zm683 96q0 53-37 90l-166 166-416-416 166-165q36-38 90-38 53 0 91 38l235 234q37 39 37 91z"/></svg></a> <a class="btn btn-xs btn-danger"><svg class="fa " viewBox="192 0 1408 1792" style="width:0.7857em;"><path d="M704 1376v-704q0-14-9-23t-23-9h-64q-14 0-23 9t-9 23v704q0 14 9 23t23 9h64q14 0 23-9t9-23zm256 0v-704q0-14-9-23t-23-9h-64q-14 0-23 9t-9 23v704q0 14 9 23t23 9h64q14 0 23-9t9-23zm256 0v-704q0-14-9-23t-23-9h-64q-14 0-23 9t-9 23v704q0 14 9 23t23 9h64q14 0 23-9t9-23zm-544-992h448l-48-117q-7-9-17-11h-317q-10 2-17 11zm928 32v64q0 14-9 23t-23 9h-96v948q0 83-47 143.500t-113 60.500h-832q-66 0-113-58.500t-47-141.500v-952h-96q-14 0-23-9t-9-23v-64q0-14 9-23t23-9h309l70-167q15-37 54-63t79-26h320q40 0 79 26t54 63l70 167h309q14 0 23 9t9 23z"/></svg></a></td></tr>
<tr><td>47991</td><td>sp_565699</td><td><svg class="timg" style=""><use href="#mol"/></svg></td><td>16756933060</td><td><span class="cj">普通会员</span></td><td><span class="ok"><svg class="fa " viewBox="128 0 1536 1792" style="width:0.8571em;"><path d="M1664 896q0 209-103 385.500t-279.500 279.500-385.500 103-385.500-103-279.500-279.500-103-385.500 103-385.500 279.500-279.500 385.500-103 385.500 103 279.500 279.500 103 385.500z"/></svg> <span class="cj">正常</span></span></td><td>0</td><td>0</td><td>18470513295</td><td></td><td></td><td></td><td>0x5b8b2e67a158c1460db66c990936139e1f6a4528</td><td><span class="cj">未绑定</span></td><td><span class="cj">未绑定</span></td><td><span class="cj">未绑定</span></td><td>2022-05-31 14:46:14</td><td><a class="btn btn-success opb">充值/扣费</a> <a class="btn btn-success opb">赠送藏品</a> <a class="btn btn-xs btn-success"><svg class="fa " viewBox="128 0 1536 1792" style="width:0.8571em;"><path d="M491 1536l91-91-235-235-91 91v107h128v128h107zm523-928q0-22-22-22-10 0-17 7l-542 542q-7 7-7 17 0 22 22 22 10 0 17-7l542-542q7-7 7-17zm-54-192l416 416-832 832h-416v-416zm683 96q0 53-37 90l-166 166-416-416 166-165q36-38 90-38 53 0 91 38l235 234q37 39 37 91z"/></svg></a> <a class="btn btn-xs btn-danger"><svg class="fa " viewBox="192 0 1408 1792" style="width:0.7857em;"><path d="M704 1376v-704q0-14-9-23t-23-9h-64q-14 0-23 9t-9 23v704q0 14 9 23t23 9h64q14 0 23-9t9-23zm256 0v-704q0-14-9-23t-23-9h-64q-14 0-23 9t-9 23v704q0 14 9 23t23 9h64q14 0 23-9t9-23zm256 0v-704q0-14-9-23t-23-9h-64q-14 0-23 9t-9 23v704q0 14 9 23t23 9h64q14 0 23-9t9-23zm-544-992h448l-48-117q-7-9-17-11h-317q-10 2-17 11zm928 32v64q0 14-9 23t-23 9h-96v948q0 83-47 143.500t-113 60.500h-832q-66 0-113-58.500t-47-141.500v-952h-96q-14 0-23-9t-9-23v-64q0-14 9-23t23-9h309l70-167q15-37 54-63t79-26h320q40 0 79 26t54 63l70 167h309q14 0 23 9t9 23z"/></svg></a></td></tr>
<tr><td>47990</td><td>sp_957941</td><td><svg class="timg" style=""><use href="#mol"/></svg></td><td>17023521363</td><td><span class="cj">普通会员</span></td><td><span class="ok"><svg class="fa " viewBox="128 0 1536 1792" style="width:0.8571em;"><path d="M1664 896q0 209-103 385.500t-279.500 279.500-385.500 103-385.500-103-279.500-279.500-103-385.500 103-385.500 279.500-279.500 385.500-103 385.500 103 279.500 279.500 103 385.500z"/></svg> <span class="cj">正常</span></span></td><td>0</td><td>0</td><td>17364666760</td><td></td><td></td><td></td><td>0xffbe7c3ab9468e7f8f75d779430ef5ce9d3f9238</td><td><span class="cj">未绑定</span></td><td><span class="cj">未绑定</span></td><td><span class="cj">未绑定</span></td><td>2022-05-31 14:46:13</td><td><a class="btn btn-success opb">充值/扣费</a> <a class="btn btn-success opb">赠送藏品</a> <a class="btn btn-xs btn-success"><svg class="fa " viewBox="128 0 1536 1792" style="width:0.8571em;"><path d="M491 1536l91-91-235-235-91 91v107h128v128h107zm523-928q0-22-22-22-10 0-17 7l-542 542q-7 7-7 17 0 22 22 22 10 0 17-7l542-542q7-7 7-17zm-54-192l416 416-832 832h-416v-416zm683 96q0 53-37 90l-166 166-416-416 166-165q36-38 90-38 53 0 91 38l235 234q37 39 37 91z"/></svg></a> <a class="btn btn-xs btn-danger"><svg class="fa " viewBox="192 0 1408 1792" style="width:0.7857em;"><path d="M704 1376v-704q0-14-9-23t-23-9h-64q-14 0-23 9t-9 23v704q0 14 9 23t23 9h64q14 0 23-9t9-23zm256 0v-704q0-14-9-23t-23-9h-64q-14 0-23 9t-9 23v704q0 14 9 23t23 9h64q14 0 23-9t9-23zm256 0v-704q0-14-9-23t-23-9h-64q-14 0-23 9t-9 23v704q0 14 9 23t23 9h64q14 0 23-9t9-23zm-544-992h448l-48-117q-7-9-17-11h-317q-10 2-17 11zm928 32v64q0 14-9 23t-23 9h-96v948q0 83-47 143.500t-113 60.500h-832q-66 0-113-58.500t-47-141.500v-952h-96q-14 0-23-9t-9-23v-64q0-14 9-23t23-9h309l70-167q15-37 54-63t79-26h320q40 0 79 26t54 63l70 167h309q14 0 23 9t9 23z"/></svg></a></td></tr>
<tr><td>47989</td><td>sp_642387</td><td><svg class="timg" style=""><use href="#mol"/></svg></td><td>16232618439</td><td><span class="cj">普通会员</span></td><td><span class="ok"><svg class="fa " viewBox="128 0 1536 1792" style="width:0.8571em;"><path d="M1664 896q0 209-103 385.500t-279.500 279.500-385.500 103-385.500-103-279.500-279.500-103-385.500 103-385.500 279.500-279.500 385.500-103 385.500 103 279.500 279.500 103 385.500z"/></svg> <span class="cj">正常</span></span></td><td>0</td><td>0</td><td>15170003168</td><td></td><td></td><td></td><td>0x70901a77c38bc12569db33f2abfb1e68f5fe6fbd</td><td><span class="cj">未绑定</span></td><td><span class="cj">未绑定</span></td><td><span class="cj">未绑定</span></td><td>2022-05-31 14:46:11</td><td><a class="btn btn-success opb">充值/扣费</a> <a class="btn btn-success opb">赠送藏品</a> <a class="btn btn-xs btn-success"><svg class="fa " viewBox="128 0 1536 1792" style="width:0.8571em;"><path d="M491 1536l91-91-235-235-91 91v107h128v128h107zm523-928q0-22-22-22-10 0-17 7l-542 542q-7 7-7 17 0 22 22 22 10 0 17-7l542-542q7-7 7-17zm-54-192l416 416-832 832h-416v-416zm683 96q0 53-37 90l-166 166-416-416 166-165q36-38 90-38 53 0 91 38l235 234q37 39 37 91z"/></svg></a> <a class="btn btn-xs btn-danger"><svg class="fa " viewBox="192 0 1408 1792" style="width:0.7857em;"><path d="M704 1376v-704q0-14-9-23t-23-9h-64q-14 0-23 9t-9 23v704q0 14 9 23t23 9h64q14 0 23-9t9-23zm256 0v-704q0-14-9-23t-23-9h-64q-14 0-23 9t-9 23v704q0 14 9 23t23 9h64q14 0 23-9t9-23zm256 0v-704q0-14-9-23t-23-9h-64q-14 0-23 9t-9 23v704q0 14 9 23t23 9h64q14 0 23-9t9-23zm-544-992h448l-48-117q-7-9-17-11h-317q-10 2-17 11zm928 32v64q0 14-9 23t-23 9h-96v948q0 83-47 143.500t-113 60.500h-832q-66 0-113-58.500t-47-141.500v-952h-96q-14 0-23-9t-9-23v-64q0-14 9-23t23-9h309l70-167q15-37 54-63t79-26h320q40 0 79 26t54 63l70 167h309q14 0 23 9t9 23z"/></svg></a></td></tr>
<tr><td>47988</td><td>sp_509856</td><td><svg class="timg" style=""><use href="#mol"/></svg></td><td>16785943498</td><td><span class="cj">普通会员</span></td><td><span class="ok"><svg class="fa " viewBox="128 0 1536 1792" style="width:0.8571em;"><path d="M1664 896q0 209-103 385.500t-279.500 279.500-385.500 103-385.500-103-279.500-279.500-103-385.500 103-385.500 279.500-279.500 385.500-103 385.500 103 279.500 279.500 103 385.500z"/></svg> <span class="cj">正常</span></span></td><td>0</td><td>0</td><td>18470513295</td><td></td><td></td><td></td><td>0x5aedf2eba0f459da8c3d54ccec2573f411165158</td><td><span class="cj">未绑定</span></td><td><span class="cj">未绑定</span></td><td><span class="cj">未绑定</span></td><td>2022-05-31 14:46:09</td><td><a class="btn btn-success opb">充值/扣费</a> <a class="btn btn-success opb">赠送藏品</a> <a class="btn btn-xs btn-success"><svg class="fa " viewBox="128 0 1536 1792" style="width:0.8571em;"><path d="M491 1536l91-91-235-235-91 91v107h128v128h107zm523-928q0-22-22-22-10 0-17 7l-542 542q-7 7-7 17 0 22 22 22 10 0 17-7l542-542q7-7 7-17zm-54-192l416 416-832 832h-416v-416zm683 96q0 53-37 90l-166 166-416-416 166-165q36-38 90-38 53 0 91 38l235 234q37 39 37 91z"/></svg></a> <a class="btn btn-xs btn-danger"><svg class="fa " viewBox="192 0 1408 1792" style="width:0.7857em;"><path d="M704 1376v-704q0-14-9-23t-23-9h-64q-14 0-23 9t-9 23v704q0 14 9 23t23 9h64q14 0 23-9t9-23zm256 0v-704q0-14-9-23t-23-9h-64q-14 0-23 9t-9 23v704q0 14 9 23t23 9h64q14 0 23-9t9-23zm256 0v-704q0-14-9-23t-23-9h-64q-14 0-23 9t-9 23v704q0 14 9 23t23 9h64q14 0 23-9t9-23zm-544-992h448l-48-117q-7-9-17-11h-317q-10 2-17 11zm928 32v64q0 14-9 23t-23 9h-96v948q0 83-47 143.500t-113 60.500h-832q-66 0-113-58.500t-47-141.500v-952h-96q-14 0-23-9t-9-23v-64q0-14 9-23t23-9h309l70-167q15-37 54-63t79-26h320q40 0 79 26t54 63l70 167h309q14 0 23 9t9 23z"/></svg></a></td></tr>
<tr><td>47987</td><td>sp_404602</td><td><svg class="timg" style=""><use href="#mol"/></svg></td><td>16232600012</td><td><span class="cj">普通会员</span></td><td><span class="ok"><svg class="fa " viewBox="128 0 1536 1792" style="width:0.8571em;"><path d="M1664 896q0 209-103 385.500t-279.500 279.500-385.500 103-385.500-103-279.500-279.500-103-385.500 103-385.500 279.500-279.500 385.500-103 385.500 103 279.500 279.500 103 385.500z"/></svg> <span class="cj">正常</span></span></td><td>0</td><td>0</td><td>18060291934</td><td></td><td></td><td></td><td>0x87db5a04f103a23ce98207ace8a6b89bac75a85d</td><td><span class="cj">未绑定</span></td><td><span class="cj">未绑定</span></td><td><span class="cj">未绑定</span></td><td>2022-05-31 14:46:08</td><td><a class="btn btn-success opb">充值/扣费</a> <a class="btn btn-success opb">赠送藏品</a> <a class="btn btn-xs btn-success"><svg class="fa " viewBox="128 0 1536 1792" style="width:0.8571em;"><path d="M491 1536l91-91-235-235-91 91v107h128v128h107zm523-928q0-22-22-22-10 0-17 7l-542 542q-7 7-7 17 0 22 22 22 10 0 17-7l542-542q7-7 7-17zm-54-192l416 416-832 832h-416v-416zm683 96q0 53-37 90l-166 166-416-416 166-165q36-38 90-38 53 0 91 38l235 234q37 39 37 91z"/></svg></a> <a class="btn btn-xs btn-danger"><svg class="fa " viewBox="192 0 1408 1792" style="width:0.7857em;"><path d="M704 1376v-704q0-14-9-23t-23-9h-64q-14 0-23 9t-9 23v704q0 14 9 23t23 9h64q14 0 23-9t9-23zm256 0v-704q0-14-9-23t-23-9h-64q-14 0-23 9t-9 23v704q0 14 9 23t23 9h64q14 0 23-9t9-23zm256 0v-704q0-14-9-23t-23-9h-64q-14 0-23 9t-9 23v704q0 14 9 23t23 9h64q14 0 23-9t9-23zm-544-992h448l-48-117q-7-9-17-11h-317q-10 2-17 11zm928 32v64q0 14-9 23t-23 9h-96v948q0 83-47 143.500t-113 60.500h-832q-66 0-113-58.500t-47-141.500v-952h-96q-14 0-23-9t-9-23v-64q0-14 9-23t23-9h309l70-167q15-37 54-63t79-26h320q40 0 79 26t54 63l70 167h309q14 0 23 9t9 23z"/></svg></a></td></tr>
<tr><td>47986</td><td>sp_944118</td><td><svg class="timg" style=""><use href="#mol"/></svg></td><td>16756073212</td><td><span class="cj">普通会员</span></td><td><span class="ok"><svg class="fa " viewBox="128 0 1536 1792" style="width:0.8571em;"><path d="M1664 896q0 209-103 385.500t-279.500 279.500-385.500 103-385.500-103-279.500-279.500-103-385.500 103-385.500 279.500-279.500 385.500-103 385.500 103 279.500 279.500 103 385.500z"/></svg> <span class="cj">正常</span></span></td><td>0</td><td>0</td><td>17364666760</td><td></td><td></td><td></td><td>0x8860681396c4ad2b305fe41cb4a2774fd16628db</td><td><span class="cj">未绑定</span></td><td><span class="cj">未绑定</span></td><td><span class="cj">未绑定</span></td><td>2022-05-31 14:46:08</td><td><a class="btn btn-success opb">充值/扣费</a> <a class="btn btn-success opb">赠送藏品</a> <a class="btn btn-xs btn-success"><svg class="fa " viewBox="128 0 1536 1792" style="width:0.8571em;"><path d="M491 1536l91-91-235-235-91 91v107h128v128h107zm523-928q0-22-22-22-10 0-17 7l-542 542q-7 7-7 17 0 22 22 22 10 0 17-7l542-542q7-7 7-17zm-54-192l416 416-832 832h-416v-416zm683 96q0 53-37 90l-166 166-416-416 166-165q36-38 90-38 53 0 91 38l235 234q37 39 37 91z"/></svg></a> <a class="btn btn-xs btn-danger"><svg class="fa " viewBox="192 0 1408 1792" style="width:0.7857em;"><path d="M704 1376v-704q0-14-9-23t-23-9h-64q-14 0-23 9t-9 23v704q0 14 9 23t23 9h64q14 0 23-9t9-23zm256 0v-704q0-14-9-23t-23-9h-64q-14 0-23 9t-9 23v704q0 14 9 23t23 9h64q14 0 23-9t9-23zm256 0v-704q0-14-9-23t-23-9h-64q-14 0-23 9t-9 23v704q0 14 9 23t23 9h64q14 0 23-9t9-23zm-544-992h448l-48-117q-7-9-17-11h-317q-10 2-17 11zm928 32v64q0 14-9 23t-23 9h-96v948q0 83-47 143.500t-113 60.500h-832q-66 0-113-58.500t-47-141.500v-952h-96q-14 0-23-9t-9-23v-64q0-14 9-23t23-9h309l70-167q15-37 54-63t79-26h320q40 0 79 26t54 63l70 167h309q14 0 23 9t9 23z"/></svg></a></td></tr>
</tbody></table><div class="pgn"><div class="pinfo">显示第 1 到第 10 条记录，总共 44506 条记录 <span class="plist">每页显示 <a class="btn btn-default psz">10 <i class="caret up"></i></a> 条记录</span></div>
<div class="pright"><ul class="pagination"><li><a style="width:64.6px">上一页</a></li><li class="active"><a style="width:34.3px">1</a></li><li><a style="width:32.5px">2</a></li><li><a style="width:33.1px">3</a></li><li><a style="width:33.1px">4</a></li><li><a style="width:33.1px">5</a></li><li class="dis"><a style="width:37.6px">...</a></li><li><a style="width:55px">4451</a></li><li><a style="width:64.4px">下一页</a></li></ul><div class="jump"><span class="jin"></span><a class="btn btn-default jbtn">跳转</a></div></div></div></div>
</div></div>
</div>
</body></html>
